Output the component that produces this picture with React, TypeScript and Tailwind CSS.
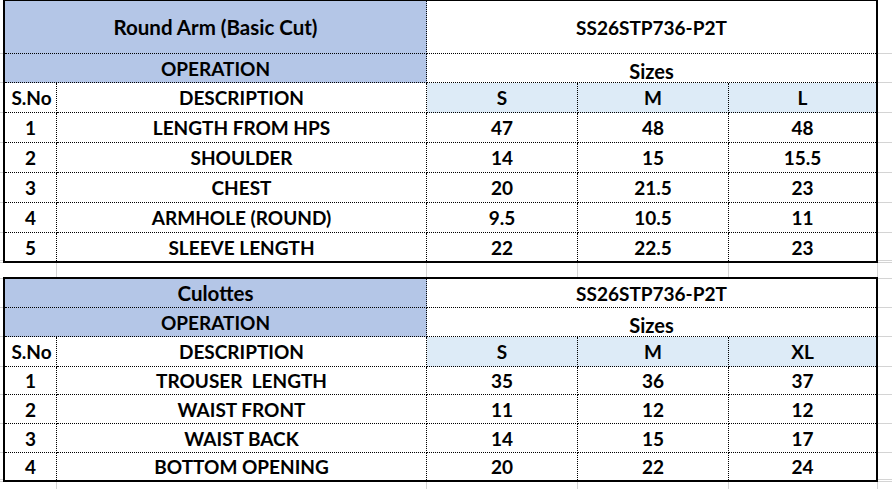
import React from "react";

const G = "border-[#d4d4d4]";

function Row({ h, children, line = true }: { h: string; children: React.ReactNode; line?: boolean }) {
  return (
    <div className={`flex ${h}`}>
      <div className={`w-[3px] shrink-0 ${line ? `border-b ${G}` : ""}`} />
      <div className="flex w-[875px] shrink-0 border-x-2 border-black">{children}</div>
      <div className={`flex-1 ${line ? `border-b ${G}` : ""}`} />
    </div>
  );
}

function Cell({
  w,
  bg = "bg-white",
  b = true,
  r = true,
  extra = "",
  children,
}: {
  w: string;
  bg?: string;
  b?: boolean;
  r?: boolean;
  extra?: string;
  children?: React.ReactNode;
}) {
  return (
    <div
      className={`${w} shrink-0 ${bg} flex items-center justify-center border-dotted border-black ${b ? "border-b" : ""} ${
        r ? "border-r" : ""
      } ${extra}`}
    >
      {children}
    </div>
  );
}

function Bar({ h }: { h: string }) {
  return (
    <div className={`flex ${h}`}>
      <div className={`w-[3px] shrink-0 border-b ${G}`} />
      <div className="w-[875px] shrink-0 bg-black" />
      <div className={`flex-1 border-b ${G}`} />
    </div>
  );
}

function GapRow({ h }: { h: string }) {
  return (
    <div className={`flex ${h}`}>
      <div className={`w-[57px] shrink-0 border-r ${G}`} />
      <div className={`w-[370px] shrink-0 border-r ${G}`} />
      <div className={`w-[151px] shrink-0 border-r ${G}`} />
      <div className={`w-[151px] shrink-0 border-r ${G}`} />
      <div className={`w-[149px] shrink-0 border-r ${G}`} />
      <div className="flex-1" />
    </div>
  );
}

type DataRow = { n: string; d: string; v: string[]; h: string };

function Table({
  title,
  titleH,
  opH,
  hdrH,
  sizes,
  rows,
}: {
  title: string;
  titleH: string;
  opH: string;
  hdrH: string;
  sizes: string[];
  rows: DataRow[];
}) {
  return (
    <>
      <Row h={titleH}>
        <Cell w="w-[422px]" bg="bg-[#b4c6e7]" extra="text-[20.5px]">{title}</Cell>
        <Cell w="w-[449px]" r={false}>SS26STP736-P2T</Cell>
      </Row>
      <Row h={opH}>
        <Cell w="w-[422px]" bg="bg-[#b4c6e7]">OPERATION</Cell>
        <Cell w="w-[449px]" r={false} extra="pt-[6px] text-[20px]">Sizes</Cell>
      </Row>
      <Row h={hdrH}>
        <Cell w="w-[52px]" extra="pl-[2px]">S.No</Cell>
        <Cell w="w-[370px]">DESCRIPTION</Cell>
        <Cell w="w-[151px]" bg="bg-[#ddebf7]">{sizes[0]}</Cell>
        <Cell w="w-[151px]" bg="bg-[#ddebf7]">{sizes[1]}</Cell>
        <Cell w="w-[147px]" bg="bg-[#ddebf7]" r={false}>{sizes[2]}</Cell>
      </Row>
      {rows.map((row, i) => {
        const last = i === rows.length - 1;
        return (
          <Row key={row.n} h={row.h}>
            <Cell w="w-[52px]" b={!last}>{row.n}</Cell>
            <Cell w="w-[370px]" b={!last} extra="whitespace-pre">{row.d}</Cell>
            <Cell w="w-[151px]" b={!last}>{row.v[0]}</Cell>
            <Cell w="w-[151px]" b={!last}>{row.v[1]}</Cell>
            <Cell w="w-[147px]" b={!last} r={false}>{row.v[2]}</Cell>
          </Row>
        );
      })}
    </>
  );
}

export default function App() {
  return (
    <div className="w-[892px] h-[489px] overflow-hidden bg-white text-black font-bold text-[19px] leading-none [font-family:Lato,'Noto_Sans',sans-serif]">
      <div className="flex h-[1px]">
        <div className="w-[3px] shrink-0" />
        <div className="w-[875px] shrink-0 bg-black" />
        <div className="flex-1" />
      </div>
      <Table
        title="Round Arm (Basic Cut)"
        titleH="h-[53px]"
        opH="h-[29px]"
        hdrH="h-[30px]"
        sizes={["S", "M", "L"]}
        rows={[
          { n: "1", d: "LENGTH FROM HPS", v: ["47", "48", "48"], h: "h-[30px]" },
          { n: "2", d: "SHOULDER", v: ["14", "15", "15.5"], h: "h-[30px]" },
          { n: "3", d: "CHEST", v: ["20", "21.5", "23"], h: "h-[30px]" },
          { n: "4", d: "ARMHOLE (ROUND)", v: ["9.5", "10.5", "11"], h: "h-[30px]" },
          { n: "5", d: "SLEEVE LENGTH", v: ["22", "22.5", "23"], h: "h-[28px]" },
        ]}
      />
      <Bar h="h-[2px]" />
      <GapRow h="h-[14px]" />
      <Bar h="h-[2px]" />
      <Table
        title="Culottes"
        titleH="h-[29px]"
        opH="h-[29px]"
        hdrH="h-[30px]"
        sizes={["S", "M", "XL"]}
        rows={[
          { n: "1", d: "TROUSER  LENGTH", v: ["35", "36", "37"], h: "h-[28px]" },
          { n: "2", d: "WAIST FRONT", v: ["11", "12", "12"], h: "h-[29px]" },
          { n: "3", d: "WAIST BACK", v: ["14", "15", "17"], h: "h-[29px]" },
          { n: "4", d: "BOTTOM OPENING", v: ["20", "22", "24"], h: "h-[27px]" },
        ]}
      />
      <Bar h="h-[2px]" />
      <GapRow h="h-[7px]" />
    </div>
  );
}
